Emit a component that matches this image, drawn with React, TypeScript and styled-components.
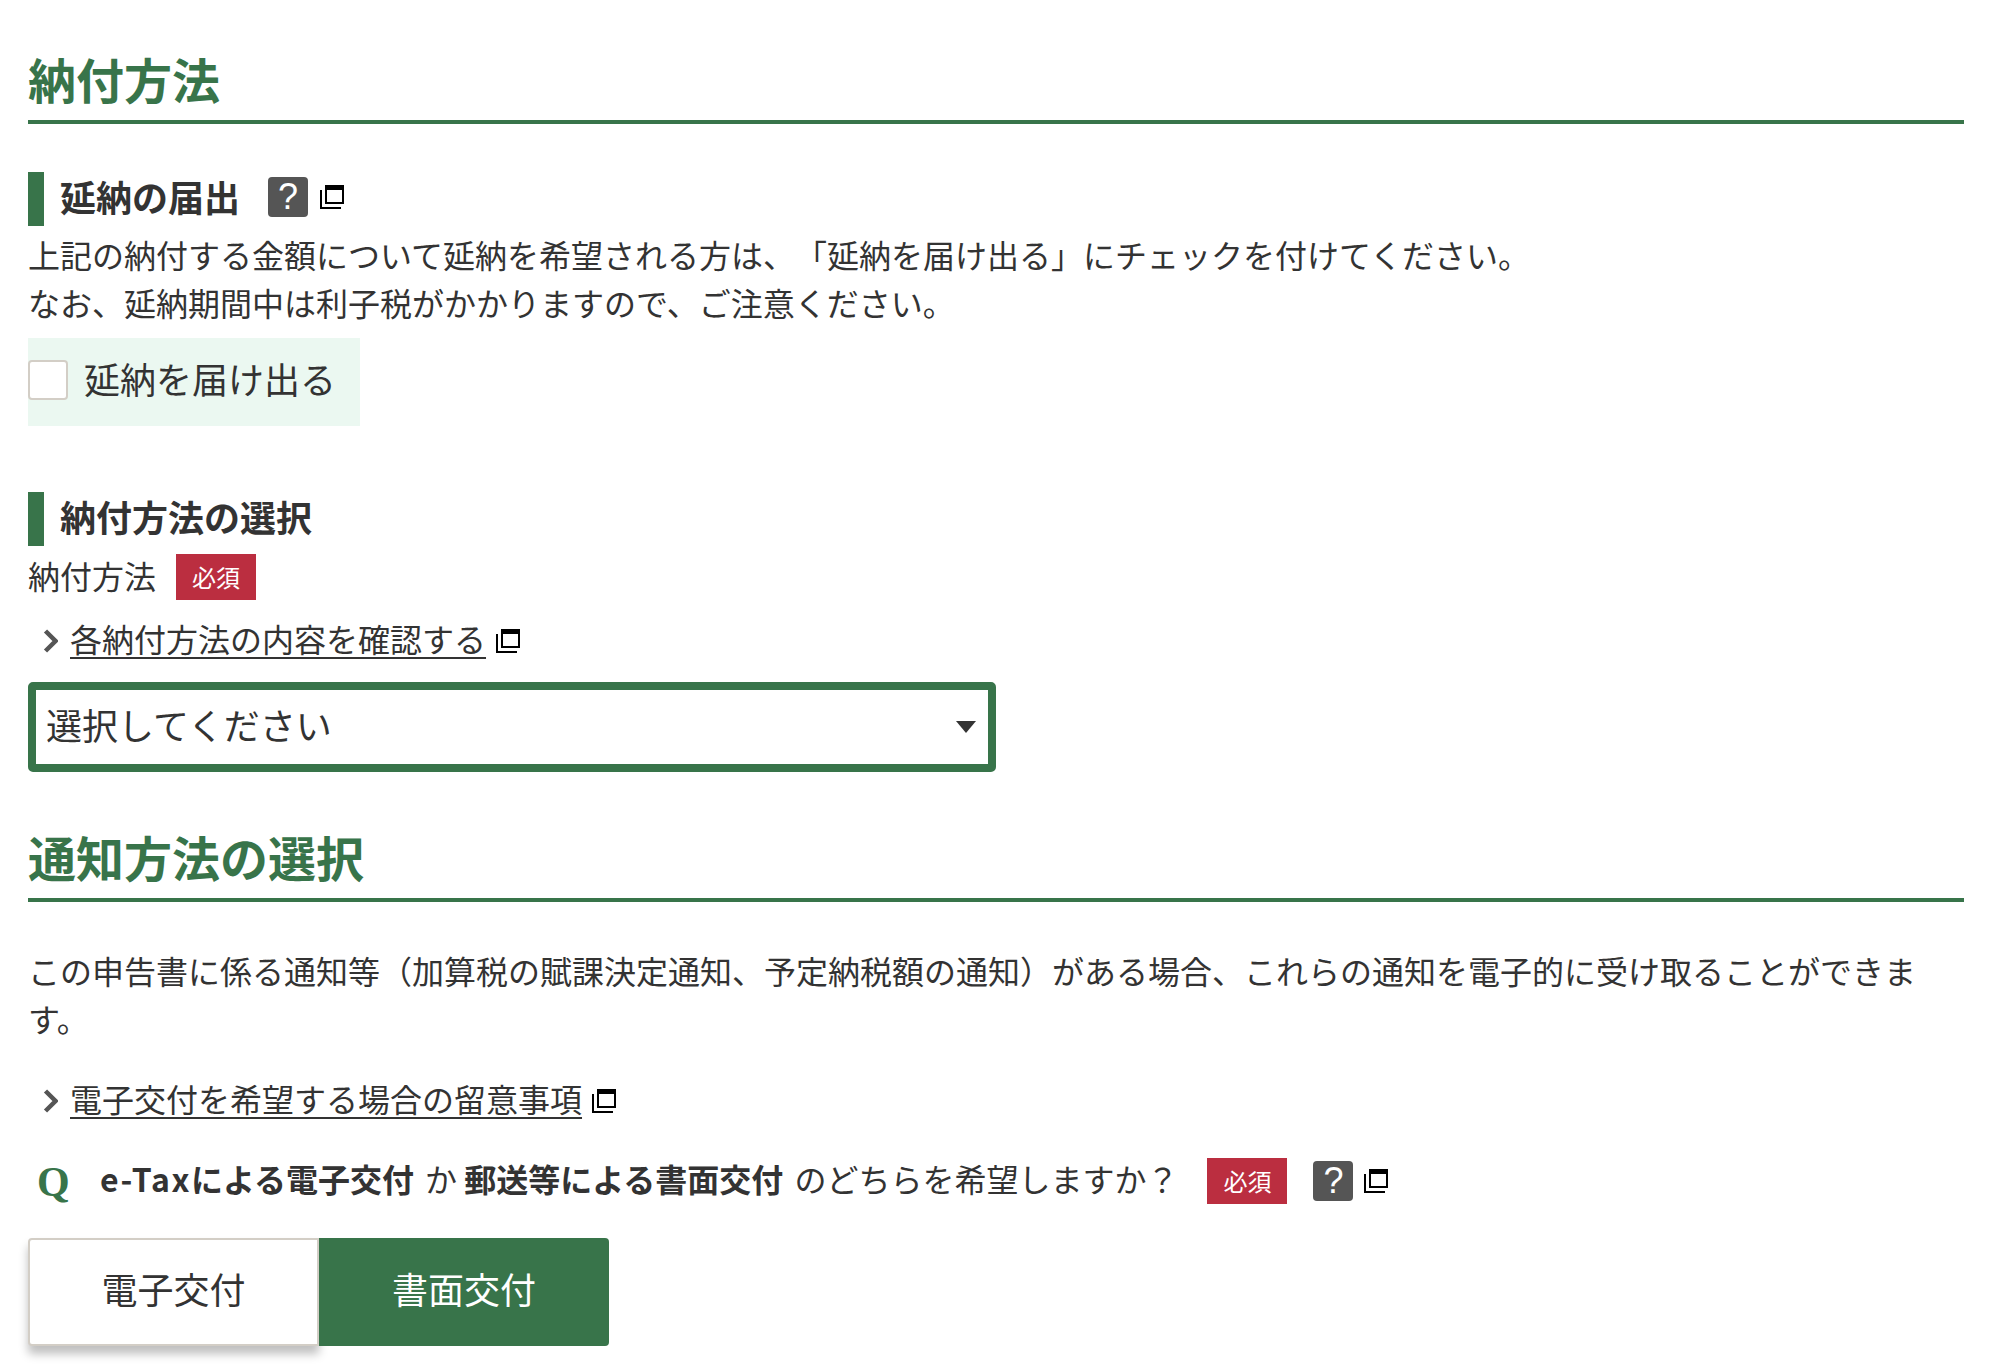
import React from 'react';
import styled, { createGlobalStyle } from 'styled-components';

const GREEN = '#38744a';
const TEXT = '#333333';

const GlobalStyle = createGlobalStyle`
	html, body {
		margin: 0;
		padding: 0;
		background: #ffffff;
	}
	body {
		font-family: "Noto Sans CJK JP", "Noto Sans", sans-serif;
		color: ${TEXT};
		text-spacing-trim: space-all;
	}
`;

const Page = styled.div`
	width: 1936px;
	height: 1368px;
	padding: 42px 38px 0 28px;
	box-sizing: content-box;
	overflow: hidden;
`;

const SectionTitle = styled.h2<{ $top?: number }>`
	margin: ${p => p.$top ?? 0}px 0 0;
	padding-bottom: 6px;
	font-size: 48px;
	line-height: 72px;
	font-weight: 700;
	color: ${GREEN};
	border-bottom: 4px solid ${GREEN};
`;

const SubTitle = styled.h3<{ $top: number }>`
	display: flex;
	align-items: center;
	box-sizing: border-box;
	height: 54px;
	margin: ${p => p.$top}px 0 0;
	padding: 0 0 5px 16px;
	border-left: 16px solid ${GREEN};
	font-size: 36px;
	font-weight: 700;
	line-height: 49px;
`;

const HelpBadge = styled.span<{ $left: number }>`
	display: inline-flex;
	align-items: center;
	justify-content: center;
	flex: none;
	width: 40px;
	height: 40px;
	margin-left: ${p => p.$left}px;
	background: #555555;
	border-radius: 4px;
	color: #ffffff;
	font-family: "Liberation Sans", sans-serif;
	font-size: 36px;
	font-weight: 400;
	line-height: 1;
`;

const Window = styled.svg<{ $left: number; $top?: number }>`
	display: block;
	flex: none;
	width: 24px;
	height: 24px;
	margin-left: ${p => p.$left}px;
	margin-top: ${p => p.$top ?? 0}px;
`;

const WindowIcon = ({ left, top }: { left: number; top?: number }) => (
	<Window $left={left} $top={top} viewBox="0 0 24 24">
		<path d="M0 5h2v17h19v2H0z" fill="#000" />
		<path d="M5 0h19v19H5z" fill="#000" />
		<path d="M7 5h15v12H7z" fill="#fff" />
	</Window>
);

const Body = styled.p<{ $top?: number }>`
	margin: ${p => p.$top ?? 0}px 0 0;
	font-size: 32px;
	line-height: 48px;
`;

const CheckPanel = styled.label`
	display: flex;
	align-items: center;
	box-sizing: border-box;
	width: 332px;
	height: 88px;
	margin-top: 12px;
	padding-bottom: 4px;
	background: #ebf8f1;
	font-size: 36px;
	line-height: 54px;
`;

const CheckBox = styled.span`
	flex: none;
	width: 40px;
	height: 40px;
	margin-right: 16px;
	box-sizing: border-box;
	background: #ffffff;
	border: 2px solid #d3cec6;
	border-radius: 4px;
`;

const CheckText = styled.span`
	padding-bottom: 4px;
`;

const FieldLabel = styled.div`
	display: flex;
	align-items: center;
	height: 46px;
	margin-top: 8px;
	font-size: 32px;
	line-height: 46px;
`;

const FieldName = styled.span`
	padding-bottom: 5px;
`;

const Required = styled.span<{ $left: number }>`
	flex: none;
	width: 80px;
	height: 46px;
	margin-left: ${p => p.$left}px;
	background: #bb2e40;
	color: #ffffff;
	font-size: 24px;
	line-height: 46px;
	text-align: center;
`;

const LinkRow = styled.div<{ $top: number }>`
	display: flex;
	align-items: center;
	height: 48px;
	margin-top: ${p => p.$top}px;
	padding-left: 15px;
	font-size: 32px;
	line-height: 48px;
`;

const Chevron = styled.svg`
	flex: none;
	width: 15px;
	height: 24px;
	margin-top: 4px;
	margin-right: 12px;
`;

const DocLink = styled.a`
	padding-bottom: 2px;
	color: ${TEXT};
	text-decoration: underline;
	text-decoration-thickness: 2px;
	text-underline-offset: 5px;
`;

const SelectBox = styled.div`
	display: flex;
	align-items: center;
	justify-content: space-between;
	box-sizing: border-box;
	width: 968px;
	height: 90px;
	margin-top: 19px;
	padding: 0 12px 6px 10px;
	border: 8px solid ${GREEN};
	border-radius: 5px;
	font-size: 36px;
`;

const Caret = styled.span`
	width: 0;
	height: 0;
	margin-top: 6px;
	border-left: 10px solid transparent;
	border-right: 10px solid transparent;
	border-top: 12px solid ${TEXT};
`;

const QuestionRow = styled.div`
	display: flex;
	align-items: center;
	height: 48px;
	margin-top: 34px;
	font-size: 32px;
	line-height: 48px;
	white-space: pre;
`;

const QMark = styled.span`
	width: 72px;
	padding: 2px 0 0 9px;
	box-sizing: border-box;
	flex: none;
	font-family: "Liberation Serif", serif;
	font-size: 42px;
	font-weight: 700;
	color: ${GREEN};
`;

const QuestionText = styled.span`
	padding-bottom: 6px;
`;

const Strong = styled.b`
	margin-right: 4px;
	font-weight: 700;
`;

const Latin = styled.span`
	letter-spacing: 1.5px;
`;

const ChoiceGroup = styled.div`
	display: flex;
	margin-top: 33px;
`;

const Choice = styled.div<{ $active?: boolean }>`
	display: flex;
	align-items: center;
	justify-content: center;
	box-sizing: border-box;
	width: ${p => (p.$active ? 290 : 291)}px;
	height: 108px;
	padding-bottom: 8px;
	font-size: 36px;
	background: ${p => (p.$active ? GREEN : '#ffffff')};
	color: ${p => (p.$active ? '#ffffff' : TEXT)};
	border: ${p => (p.$active ? 'none' : '2px solid #d3cec6')};
	border-radius: ${p => (p.$active ? '0 4px 4px 0' : '4px 0 0 4px')};
	box-shadow: ${p => (p.$active ? 'none' : '0 8px 10px rgba(0, 0, 0, 0.25)')};
`;

const ChevronIcon = () => (
	<Chevron viewBox="0 0 15 24">
		<path d="M2.5 2l10 10-10 10" fill="none" stroke="#555" strokeWidth="4.5" />
	</Chevron>
);

export default function App() {
	return (
		<Page>
			<GlobalStyle />
			<SectionTitle>納付方法</SectionTitle>
			<SubTitle $top={48}>
				延納の届出
				<HelpBadge $left={28}>?</HelpBadge>
				<WindowIcon left={12} />
			</SubTitle>
			<Body $top={4}>
				上記の納付する金額について延納を希望される方は、「延納を届け出る」にチェックを付けてください。
				<br />
				なお、延納期間中は利子税がかかりますので、ご注意ください。
			</Body>
			<CheckPanel>
				<CheckBox />
				<CheckText>延納を届け出る</CheckText>
			</CheckPanel>
			<SubTitle $top={66}>納付方法の選択</SubTitle>
			<FieldLabel>
				<FieldName>納付方法</FieldName>
				<Required $left={20}>必須</Required>
			</FieldLabel>
			<LinkRow $top={15}>
				<ChevronIcon />
				<DocLink>各納付方法の内容を確認する</DocLink>
				<WindowIcon left={10} top={4} />
			</LinkRow>
			<SelectBox>
				選択してください
				<Caret />
			</SelectBox>
			<SectionTitle $top={48}>通知方法の選択</SectionTitle>
			<Body $top={44}>
				この申告書に係る通知等（加算税の賦課決定通知、予定納税額の通知）がある場合、これらの通知を電子的に受け取ることができます。
			</Body>
			<LinkRow $top={33}>
				<ChevronIcon />
				<DocLink>電子交付を希望する場合の留意事項</DocLink>
				<WindowIcon left={10} top={4} />
			</LinkRow>
			<QuestionRow>
				<QMark>Q</QMark>
				<QuestionText>
					<Strong><Latin>e-Tax</Latin>による電子交付</Strong> か <Strong>郵送等による書面交付</Strong> のどちらを希望しますか？
				</QuestionText>
				<Required $left={29}>必須</Required>
				<HelpBadge $left={26}>?</HelpBadge>
				<WindowIcon left={11} />
			</QuestionRow>
			<ChoiceGroup>
				<Choice>電子交付</Choice>
				<Choice $active>書面交付</Choice>
			</ChoiceGroup>
		</Page>
	);
}
